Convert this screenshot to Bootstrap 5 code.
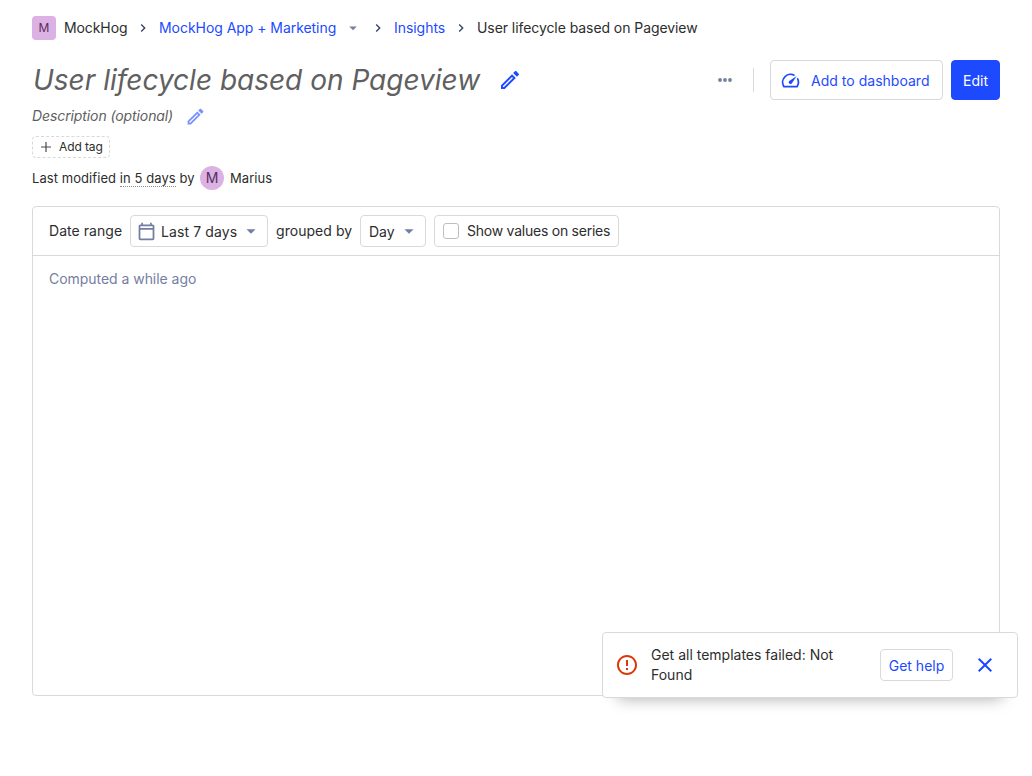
<!DOCTYPE html>
<html lang="en">
<head>
<meta charset="utf-8">
<meta name="viewport" content="width=device-width, initial-scale=1">
<title>User lifecycle based on Pageview • MockHog</title>
<link href="https://cdn.jsdelivr.net/npm/bootstrap@5.3.0/dist/css/bootstrap.min.css" rel="stylesheet">
<style>
  :root { --ph-blue: #1d4aff; --ph-text: #2d2d2d; --ph-line: #d9d9d9; --ph-muted: #747ea2; --ph-lilac: #dcb1e3; }
  body { font-family: Inter, "Liberation Sans", sans-serif; font-size: 14px; font-weight: 400; line-height: 22px; color: var(--ph-text); background: #fff; overflow: hidden; }
  svg { display: block; flex: none; fill: currentColor; }
  .scene { padding: 0 32px; }
  .crumbs { height: 56px; letter-spacing: -.07px; }
  .crumbs a { color: var(--ph-blue); }
  .avatar { width: 24px; height: 24px; background: var(--ph-lilac); color: #572e5e; flex: none; }
  .crumbs .avatar { border-radius: 4px; font-size: 12px; }
  .crumb-name { width: 63px; white-space: nowrap; letter-spacing: -.1px; }
  .crumb-project { width: 177px; white-space: nowrap; letter-spacing: -.05px; }
  .crumb-scene { width: 51px; white-space: nowrap; letter-spacing: -.05px; }
  .sep { color: #35416b; margin: 0 8px; }
  .drop-sm { margin-left: 8px; }
  .ph-muted { color: var(--ph-muted); }
  .title-row { height: 40px; margin-top: 4px; }
  h1 { font-size: 28px; line-height: 40px; font-weight: 400; font-style: italic; color: #606060; padding-left: 1px; width: 450px; white-space: nowrap; }
  .title-row > .pen { margin-left: 16px; }
  .ph-blue, .ph-btn.ph-blue { color: var(--ph-blue); }
  .divider { width: 1px; height: 24px; background: var(--ph-line); margin: 0 16px 0 20px; }
  .ph-btn { display: flex; align-items: center; border: 1px solid var(--ph-line); border-radius: 4px; background: #fff; color: var(--ph-text); font-size: 14px; line-height: 22px; font-weight: 400; padding: 2px 0 0; white-space: nowrap; }
  .ph-btn-lg { height: 40px; color: var(--ph-blue); }
  .btn-dash { width: 173px; padding-left: 9px; }
  .btn-dash span { margin-left: 10px; letter-spacing: .02px; }
  .ph-btn-primary { width: 49px; background: var(--ph-blue); border-color: var(--ph-blue); color: #fff; }
  .ph-btn-sm { height: 32px; }
  .ph-btn svg { margin-top: -2px; }
  .desc { height: 32px; font-style: italic; color: #606060; letter-spacing: -.1px; }
  .desc span { width: 143px; white-space: nowrap; }
  .desc .pen { margin: 0 0 0 10px; opacity: .6; }
  .tag { height: 22px; width: 78px; margin-top: 4px; border: 1px dashed var(--ph-line); border-radius: 4px; font-size: 12px; line-height: 20px; letter-spacing: -.1px; }
  .tag svg { margin: 0 6px; color: #4a4a4a; }
  .modified { height: 24px; margin-top: 8px; font-size: 13px; letter-spacing: .07px; }
  .modified .avatar { font-size: 14px; margin: 0 6px 0 5px; }
  .modified-text { width: 163px; white-space: nowrap; }
  .dotted { border-bottom: 1px dotted #8a8a8a; line-height: 17px; }
  .insight { height: 490px; margin-top: 16px; border: 1px solid var(--ph-line); border-radius: 4px; }
  .insight-bar { height: 49px; padding: 0 16px; border-bottom: 1px solid var(--ph-line); white-space: nowrap; }
  .lbl-range { width: 73px; letter-spacing: .05px; }
  .lbl-group { width: 76px; letter-spacing: .05px; }
  .btn-range { width: 138px; padding-left: 5px; }
  .btn-range span { margin-left: 4px; letter-spacing: .1px; }
  .btn-day { width: 66px; padding-left: 8px; }
  .arrow { margin-left: auto; margin-right: 5px; }
  .values { width: 185px; padding: 0 0 0 8px; letter-spacing: -.24px; }
  .box { width: 16px; height: 16px; border: 1px solid #bfbfbf; border-radius: 3px; }
  .computed { padding: 12px 16px; letter-spacing: -.04px; }
  .note { left: 602px; top: 632px; width: 416px; height: 66px; border: 1px solid var(--ph-line); border-radius: 4px; background: #fff; box-shadow: 0 16px 16px -16px rgba(0,0,0,.35); line-height: 20px; padding-left: 12px; }
  .note-icon { color: #db3707; }
  .note-text { width: 217px; margin-left: 12px; }
  .note-help { width: 73px; margin-left: 12px; }
  .note-close { margin-left: 20px; }
</style>
</head>
<body>
<svg width="0" height="0" class="position-absolute" aria-hidden="true">
  <symbol id="chev" viewBox="0 0 24 24"><path d="M8.59 16.59 13.17 12 8.59 7.41 10 6l6 6-6 6z"/></symbol>
  <symbol id="drop" viewBox="0 0 24 24"><path d="m7 10 5 5 5-5z"/></symbol>
  <symbol id="pen" viewBox="0 0 24 24"><path d="M14.06 9.02l.92.92L5.92 19H5v-.92l9.06-9.06M17.66 3c-.25 0-.51.1-.7.29l-1.83 1.83 3.75 3.75 1.83-1.83c.39-.39.39-1.02 0-1.41l-2.34-2.34c-.2-.2-.45-.29-.71-.29zm-3.6 3.19L3 17.25V21h3.75L17.81 9.94l-3.75-3.75z"/></symbol>
</svg>
<main class="scene">
  <nav class="crumbs d-flex align-items-center" aria-label="breadcrumb">
    <span class="avatar d-flex align-items-center justify-content-center me-2">M</span>
    <span class="crumb-name">MockHog</span>
    <svg class="sep" width="16" height="16"><use href="#chev"/></svg>
    <a href="#" class="crumb-project text-decoration-none">MockHog App + Marketing</a>
    <svg class="drop-sm ph-muted" width="18" height="18"><use href="#drop"/></svg>
    <svg class="sep" width="16" height="16"><use href="#chev"/></svg>
    <a href="#" class="crumb-scene text-decoration-none">Insights</a>
    <svg class="sep" width="16" height="16"><use href="#chev"/></svg>
    <span>User lifecycle based on Pageview</span>
  </nav>
  <header class="title-row d-flex align-items-center">
    <h1 class="m-0">User lifecycle based on Pageview</h1>
    <svg class="pen ph-blue" width="24" height="24"><use href="#pen"/></svg>
    <svg class="ph-muted ms-auto" width="16" height="16" viewBox="0 0 16 16"><circle cx="3" cy="8" r="1.9"/><circle cx="8" cy="8" r="1.9"/><circle cx="13" cy="8" r="1.9"/></svg>
    <span class="divider"></span>
    <button class="ph-btn ph-btn-lg btn-dash">
      <svg width="21" height="21" viewBox="0 0 24 24"><path d="M20.38 8.57l-1.23 1.85a8 8 0 0 1-.22 7.58H5.07A8 8 0 0 1 15.58 6.85l1.85-1.23A10 10 0 0 0 3.35 19a2 2 0 0 0 1.72 1h13.85a2 2 0 0 0 1.74-1 10 10 0 0 0-.27-10.44zm-9.79 6.84a2 2 0 0 0 2.83 0l5.66-8.49-8.49 5.66a2 2 0 0 0 0 2.83z"/></svg>
      <span>Add to dashboard</span>
    </button>
    <button class="ph-btn ph-btn-lg ph-btn-primary justify-content-center ms-2">Edit</button>
  </header>
  <div class="desc d-flex align-items-center">
    <span>Description (optional)</span>
    <svg class="pen ph-blue" width="21" height="21"><use href="#pen"/></svg>
  </div>
  <div class="tag d-flex align-items-center">
    <svg width="14" height="14" viewBox="0 0 14 14"><path d="M6.4 2h1.2v4.4H12v1.2H7.6V12H6.4V7.6H2V6.4h4.4z"/></svg>
    <span>Add tag</span>
  </div>
  <div class="modified d-flex align-items-center">
    <span class="modified-text">Last modified <span class="dotted">in 5 days</span> by</span>
    <span class="avatar rounded-circle d-flex align-items-center justify-content-center">M</span>
    <span>Marius</span>
  </div>
  <section class="insight">
    <div class="insight-bar d-flex align-items-center gap-2">
      <span class="lbl-range">Date range</span>
      <button class="ph-btn ph-btn-sm btn-range">
        <svg class="ph-muted" width="21" height="21" viewBox="0 0 24 24"><path d="M19 4h-1V2h-2v2H8V2H6v2H5c-1.11 0-1.99.9-1.99 2L3 20c0 1.1.89 2 2 2h14c1.1 0 2-.9 2-2V6c0-1.1-.9-2-2-2zm0 16H5V10h14v10zm0-12H5V6h14v2z"/></svg>
        <span>Last 7 days</span>
        <svg class="arrow ph-muted" width="22" height="22"><use href="#drop"/></svg>
      </button>
      <span class="lbl-group">grouped by</span>
      <button class="ph-btn ph-btn-sm btn-day">
        <span>Day</span>
        <svg class="arrow ph-muted" width="22" height="22"><use href="#drop"/></svg>
      </button>
      <label class="ph-btn ph-btn-sm values"><span class="box me-2"></span><span>Show values on series</span></label>
    </div>
    <div class="computed ph-muted">Computed a while ago</div>
  </section>
</main>
<div class="note position-absolute d-flex align-items-center" role="alert">
  <svg class="note-icon" width="24" height="24" viewBox="0 0 24 24"><path d="M11 15h2v2h-2zm0-8h2v6h-2zm.99-5C6.47 2 2 6.48 2 12s4.47 10 9.99 10C17.52 22 22 17.52 22 12S17.52 2 11.99 2zM12 20c-4.42 0-8-3.58-8-8s3.58-8 8-8 8 3.58 8 8-3.58 8-8 8z"/></svg>
  <div class="note-text">Get all templates failed: Not<br>Found</div>
  <button class="ph-btn ph-btn-sm ph-blue justify-content-center note-help">Get help</button>
  <svg class="ph-blue note-close" width="24" height="24" viewBox="0 0 24 24"><path d="M19 6.41 17.59 5 12 10.59 6.41 5 5 6.41 10.59 12 5 17.59 6.41 19 12 13.41 17.59 19 19 17.59 13.41 12z"/></svg>
</div>
<script src="https://cdn.jsdelivr.net/npm/bootstrap@5.3.0/dist/js/bootstrap.bundle.min.js"></script>
</body>
</html>
